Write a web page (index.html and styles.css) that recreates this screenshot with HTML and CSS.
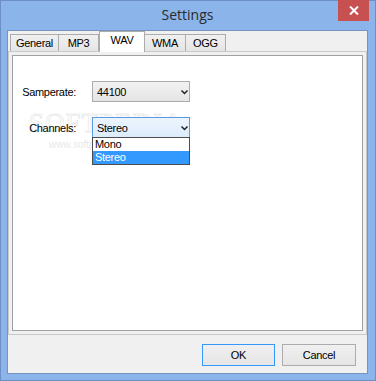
FILE: index.html
```html
<!DOCTYPE html>
<html lang="en">
<head>
<meta charset="UTF-8">
<meta name="viewport" content="width=device-width, initial-scale=1.0">
<title>Settings</title>
<link rel="stylesheet" href="styles.css">
</head>
<body>

<div class="window">
    <div class="titlebar">
        <span></span>
        <span class="title">Settings</span>
        <div class="close">
            <svg width="10" height="9" viewBox="0 0 10 9">
                <path d="M1 0.5 L9 8.5 M9 0.5 L1 8.5" stroke="#ffffff" stroke-width="2"/>
            </svg>
        </div>
    </div>
    <div class="client">
        <div class="tabs">
            <div class="tab tab-general">General</div>
            <div class="tab tab-mp3">MP3</div>
            <div class="tab tab-wav active">WAV</div>
            <div class="tab tab-wma">WMA</div>
            <div class="tab tab-ogg">OGG</div>
        </div>
        <div class="tabpage">
            <div class="panel">
                <div class="watermark">SOFTPEDIA<sup>™</sup></div>
                <div class="watermark-url">www.softpedia.com</div>
                <div class="form">
                    <label class="label">Samperate:</label>
                    <div class="select">
                        <span>44100</span>
                        <svg class="chevron" width="7" height="5" viewBox="0 0 7 5"><path d="M0.5 0.5 L3.5 3.5 L6.5 0.5" stroke="#222" stroke-width="1.5" fill="none"/></svg>
                    </div>
                    <label class="label">Channels:</label>
                    <div class="select select-open">
                        <span>Stereo</span>
                        <svg class="chevron" width="7" height="5" viewBox="0 0 7 5"><path d="M0.5 0.5 L3.5 3.5 L6.5 0.5" stroke="#222" stroke-width="1.5" fill="none"/></svg>
                        <div class="dropdown">
                            <div class="option">Mono</div>
                            <div class="option selected">Stereo</div>
                        </div>
                    </div>
                </div>
            </div>
        </div>
        <div class="buttons">
            <div class="btn btn-default">OK</div>
            <div class="btn">Cancel</div>
        </div>
    </div>
</div>

</body>
</html>
```

FILE: styles.css
```css
body {
    margin: 0;
    padding: 0;
    font-family: "Liberation Sans", Arial, sans-serif;
    font-size: 11px;
    letter-spacing: -0.3px;
    color: #000000;
}
.window {
    width: 376px;
    height: 381px;
    box-sizing: border-box;
    border: 1px solid #6d8fc3;
    background-color: #8ab4ea;
    padding: 0 7px 6px 6px;
}
.titlebar {
    height: 29px;
    display: grid;
    grid-template-columns: 1fr auto 1fr;
}
.title {
    font-family: "Open Sans", sans-serif;
    font-size: 14px;
    letter-spacing: 0;
    color: #2b2b2b;
    line-height: 28px;
}
.close {
    justify-self: end;
    width: 31px;
    height: 21px;
    margin-top: -1px;
    margin-right: -1px;
    background-color: #c75050;
    display: flex;
    align-items: center;
    justify-content: center;
}
.client {
    height: 344px;
    box-sizing: border-box;
    border: 1px solid #7594c4;
    background-color: #f0f0f0;
    display: flex;
    flex-direction: column;
}
.tabs {
    height: 20px;
    display: flex;
    align-items: flex-end;
    padding-left: 2px;
}
.tab {
    height: 17px;
    box-sizing: border-box;
    border: 1px solid #acacac;
    border-bottom: none;
    background: linear-gradient(#f0f0f0, #e5e5e5);
    text-align: center;
    line-height: 16px;
}
.tab-general { width: 49px; }
.tab-mp3 { width: 40px; border-left: none; }
.tab-wav { width: 46px; }
.tab-wma { width: 41px; border-left: none; }
.tab-ogg { width: 40px; border-left: none; }
.tab.active {
    height: 21px;
    margin-bottom: -1px;
    background: #ffffff;
    position: relative;
    z-index: 1;
    line-height: 17px;
}
.tabpage {
    height: 284px;
    box-sizing: border-box;
    border: 1px solid #c9c9c9;
    padding: 3px;
}
.panel {
    height: 100%;
    box-sizing: border-box;
    border: 1px solid #a0a0a0;
    background-color: #ffffff;
    position: relative;
    padding-top: 25px;
}
.watermark {
    position: absolute;
    left: 16px;
    top: 52px;
    font-family: "Liberation Serif", serif;
    font-size: 27px;
    letter-spacing: 1px;
    color: transparent;
    -webkit-text-stroke: 1px #ededed;
}
.watermark sup {
    font-family: "Liberation Sans", sans-serif;
    font-size: 8px;
    -webkit-text-stroke: 0;
    color: #e6e6e6;
}
.watermark-url {
    position: absolute;
    left: 36px;
    top: 83px;
    font-size: 10px;
    letter-spacing: 0;
    color: #e9e9e9;
}
.form {
    display: grid;
    grid-template-columns: 63px 98px;
    column-gap: 16px;
    row-gap: 15px;
    position: relative;
}
.label {
    text-align: right;
    align-self: center;
}
.select {
    height: 21px;
    box-sizing: border-box;
    border: 1px solid #acacac;
    background: linear-gradient(#f2f2f2, #e5e5e5);
    display: flex;
    align-items: center;
    justify-content: space-between;
    padding: 0 1px 0 4px;
    position: relative;
}
.select-open {
    border-color: #569de5;
    background: linear-gradient(#ecf4fc, #dcecfc);
}
.chevron {
    margin-top: 1px;
}
.dropdown {
    position: absolute;
    left: -1px;
    right: -1px;
    top: 19px;
    border: 1px solid #4d4d4d;
    background-color: #ffffff;
}
.option {
    height: 13px;
    line-height: 13px;
    padding-left: 2px;
}
.option.selected {
    background-color: #3399ff;
    color: #ffffff;
}
.buttons {
    flex: 1;
    display: flex;
    justify-content: flex-end;
    gap: 7px;
    padding: 9px 11px 0 0;
}
.btn {
    width: 74px;
    height: 22px;
    box-sizing: border-box;
    border: 1px solid #acacac;
    background: linear-gradient(#f0f0f0, #e5e5e5);
    text-align: center;
    line-height: 20px;
}
.btn-default {
    width: 73px;
    border-color: #3399ff;
}
```
